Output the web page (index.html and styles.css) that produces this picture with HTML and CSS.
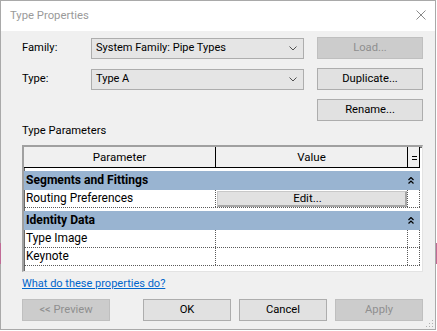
FILE: index.html
```html
<!DOCTYPE html>
<html>
<head>
<meta charset="utf-8">
<link rel="stylesheet" href="styles.css">
</head>
<body>
<div class="window">
  <div class="titlebar">
    <span class="title">Type Properties</span>
    <svg class="close" width="10" height="10" viewBox="0 0 10 10"><path d="M0.5 0.5 L9.5 9.5 M9.5 0.5 L0.5 9.5" stroke="#8a8a8a" stroke-width="1" fill="none"/></svg>
  </div>
  <div class="content">
    <div class="props">
      <span class="field-label">Family:</span>
      <div class="combo"><span>System Family: Pipe Types</span><svg class="chev" width="8" height="5" viewBox="0 0 8 5"><path d="M0.5 0.5 L4 4 L7.5 0.5" stroke="#505050" stroke-width="1" fill="none"/></svg></div>
      <button class="btn disabled">Load...</button>
      <span class="field-label">Type:</span>
      <div class="combo"><span>Type A</span><svg class="chev" width="8" height="5" viewBox="0 0 8 5"><path d="M0.5 0.5 L4 4 L7.5 0.5" stroke="#505050" stroke-width="1" fill="none"/></svg></div>
      <button class="btn">Duplicate...</button>
      <button class="btn rename">Rename...</button>
    </div>
    <div class="section-label">Type Parameters</div>
    <div class="grid">
      <div class="head">
        <div class="hc c1">Parameter</div>
        <div class="hc c2">Value</div>
        <div class="hc c3"><svg width="5" height="5" viewBox="0 0 5 5"><path d="M0 1.5 H5 M0 4.5 H5" stroke="#000" stroke-width="1"/></svg></div>
      </div>
      <div class="group"><span class="gname">Segments and Fittings</span><span class="gicon"><svg width="6" height="7" viewBox="0 0 6 7"><path d="M0.5 3 L3 0.6 L5.5 3 M0.5 6.5 L3 4.1 L5.5 6.5" stroke="#000" stroke-width="1.3" fill="none"/></svg></span></div>
      <div class="row">
        <div class="cell c1">Routing Preferences</div>
        <div class="cell c2"><div class="edit">Edit...</div></div>
        <div class="cell c3"></div>
      </div>
      <div class="group"><span class="gname">Identity Data</span><span class="gicon"><svg width="6" height="7" viewBox="0 0 6 7"><path d="M0.5 3 L3 0.6 L5.5 3 M0.5 6.5 L3 4.1 L5.5 6.5" stroke="#000" stroke-width="1.3" fill="none"/></svg></span></div>
      <div class="row">
        <div class="cell c1">Type Image</div>
        <div class="cell c2"></div>
        <div class="cell c3"></div>
      </div>
      <div class="row">
        <div class="cell c1">Keynote</div>
        <div class="cell c2"></div>
        <div class="cell c3"></div>
      </div>
    </div>
    <div class="help"><a href="#" class="link">What do these properties do?</a></div>
    <div class="actions">
      <button class="btn wide disabled preview">&lt;&lt; Preview</button>
      <button class="btn wide">OK</button>
      <button class="btn wide">Cancel</button>
      <button class="btn wide disabled">Apply</button>
    </div>
  </div>
  <span class="bleed bleed-left"></span>
  <span class="bleed bleed-right"></span>
  <svg class="grip" width="9" height="9" viewBox="0 0 9 9">
    <rect x="7" y="1" width="1" height="1" fill="#b0b0b0"/>
    <rect x="4" y="4" width="1" height="1" fill="#b0b0b0"/>
    <rect x="7" y="4" width="1" height="1" fill="#b0b0b0"/>
    <rect x="1" y="7" width="1" height="1" fill="#b0b0b0"/>
    <rect x="4" y="7" width="1" height="1" fill="#b0b0b0"/>
    <rect x="7" y="7" width="1" height="1" fill="#b0b0b0"/>
  </svg>
</div>
</body>
</html>
```
FILE: styles.css
```css
html, body {
  margin: 0;
  padding: 0;
  background: #ffffff;
}
body {
  font-family: Roboto, "Noto Sans", sans-serif;
  font-size: 11.2px;
  color: #000;
}
.window {
  position: relative;
  width: 436px;
  height: 330px;
  box-sizing: border-box;
  border: 1px solid #a9a9a9;
  background: #f0f0f0;
  display: flex;
  flex-direction: column;
}
.titlebar {
  height: 30px;
  flex: none;
  background: #ffffff;
  display: flex;
  align-items: center;
  justify-content: space-between;
  padding: 0 9px;
}
.title {
  color: #9a9a9a;
  font-size: 11.3px;
  line-height: 16px;
}
.close {
  display: block;
  margin-top: -2px;
}
.content {
  padding: 6px 12px 0 21px;
  display: flex;
  flex-direction: column;
}
.props {
  display: grid;
  grid-template-columns: 69px 226px 106px;
  grid-auto-rows: 22px;
  row-gap: 9px;
  align-items: center;
}
.field-label {
  line-height: 16px;
}
.combo {
  height: 21px;
  width: 213px;
  box-sizing: border-box;
  border: 1px solid #adadad;
  background: #e5e5e5;
  display: flex;
  align-items: center;
  justify-content: space-between;
  padding: 0 6px 0 4px;
  line-height: 16px;
  font-size: 11px;
}
.chev {
  display: block;
}
.btn {
  font-family: inherit;
  font-size: 11.2px;
  height: 22px;
  box-sizing: border-box;
  border: 1px solid #adadad;
  background: #e1e1e1;
  color: #000;
  padding: 0;
  margin: 0;
  line-height: 16px;
}
.btn.disabled {
  background: #cccccc;
  border-color: #bfbfbf;
  color: #8f8f8f;
}
.rename {
  grid-column: 3;
}
.section-label {
  margin-top: 2px;
  line-height: 16px;
  margin-bottom: 6px;
}
.grid {
  height: 127px;
  box-sizing: border-box;
  border-top: 2px solid #a0a0a0;
  border-left: 2px solid #a0a0a0;
  border-right: 1px solid #e3e3e3;
  border-bottom: 1px solid #e3e3e3;
  box-shadow: inset 1px 1px 0 #696969;
  background: #ffffff;
  font-size: 11.9px;
}
.head {
  display: flex;
  width: 396px;
  height: 21px;
  box-sizing: border-box;
  border-bottom: 1px solid #000;
  background: #f0f0f0;
  font-size: 11.5px;
}
.hc {
  box-sizing: border-box;
  border-right: 1px solid #000;
  display: flex;
  align-items: center;
  justify-content: center;
  line-height: 16px;
}
.c1 { width: 192px; }
.c2 { width: 192px; }
.c3 { width: 12px; }
.hc.c3 svg {
  display: block;
  margin-left: 1px;
}
.group {
  margin-top: 3px;
  width: 396px;
  height: 19px;
  background: #99b4d1;
  display: flex;
  align-items: center;
  justify-content: space-between;
  font-weight: bold;
  font-size: 12.1px;
  line-height: 17px;
}
.gname {
  padding-left: 2px;
}
.gicon {
  width: 12px;
  display: flex;
}
.gicon svg {
  display: block;
  margin-left: 0;
}
.row {
  display: flex;
  width: 396px;
  height: 18px;
  box-sizing: border-box;
  border-bottom: 1px dotted #5a5a5a;
}
.cell {
  box-sizing: border-box;
  border-right: 1px dotted #5a5a5a;
  line-height: 17px;
  white-space: nowrap;
}
.cell.c1 {
  padding-left: 2px;
}
.cell.c2 {
  padding: 1px 0 0 1px;
}
.edit {
  height: 16px;
  box-sizing: border-box;
  background: #e1e1e1;
  border-top: 1px solid #c8c8c8;
  border-left: 1px solid #c8c8c8;
  border-right: 2px solid #a6a6a6;
  border-bottom: 2px solid #a6a6a6;
  text-align: center;
  font-size: 11.5px;
  line-height: 13px;
  padding-right: 8px;
}
.help {
  margin-top: 4px;
  line-height: 16px;
  font-size: 11px;
}
.link {
  color: #0066cc;
  text-decoration: underline;
}
.actions {
  margin-top: 7px;
  display: flex;
  gap: 8px;
}
.btn.wide {
  width: 88px;
}
.preview {
  margin-right: 25px;
}
.bleed {
  position: absolute;
  width: 1px;
  height: 21px;
  top: 242px;
  background: #c06b96;
}
.bleed-left {
  left: -1px;
}
.bleed-right {
  right: -2px;
}
.grip {
  position: absolute;
  right: 1px;
  bottom: 1px;
  display: block;
}
```
